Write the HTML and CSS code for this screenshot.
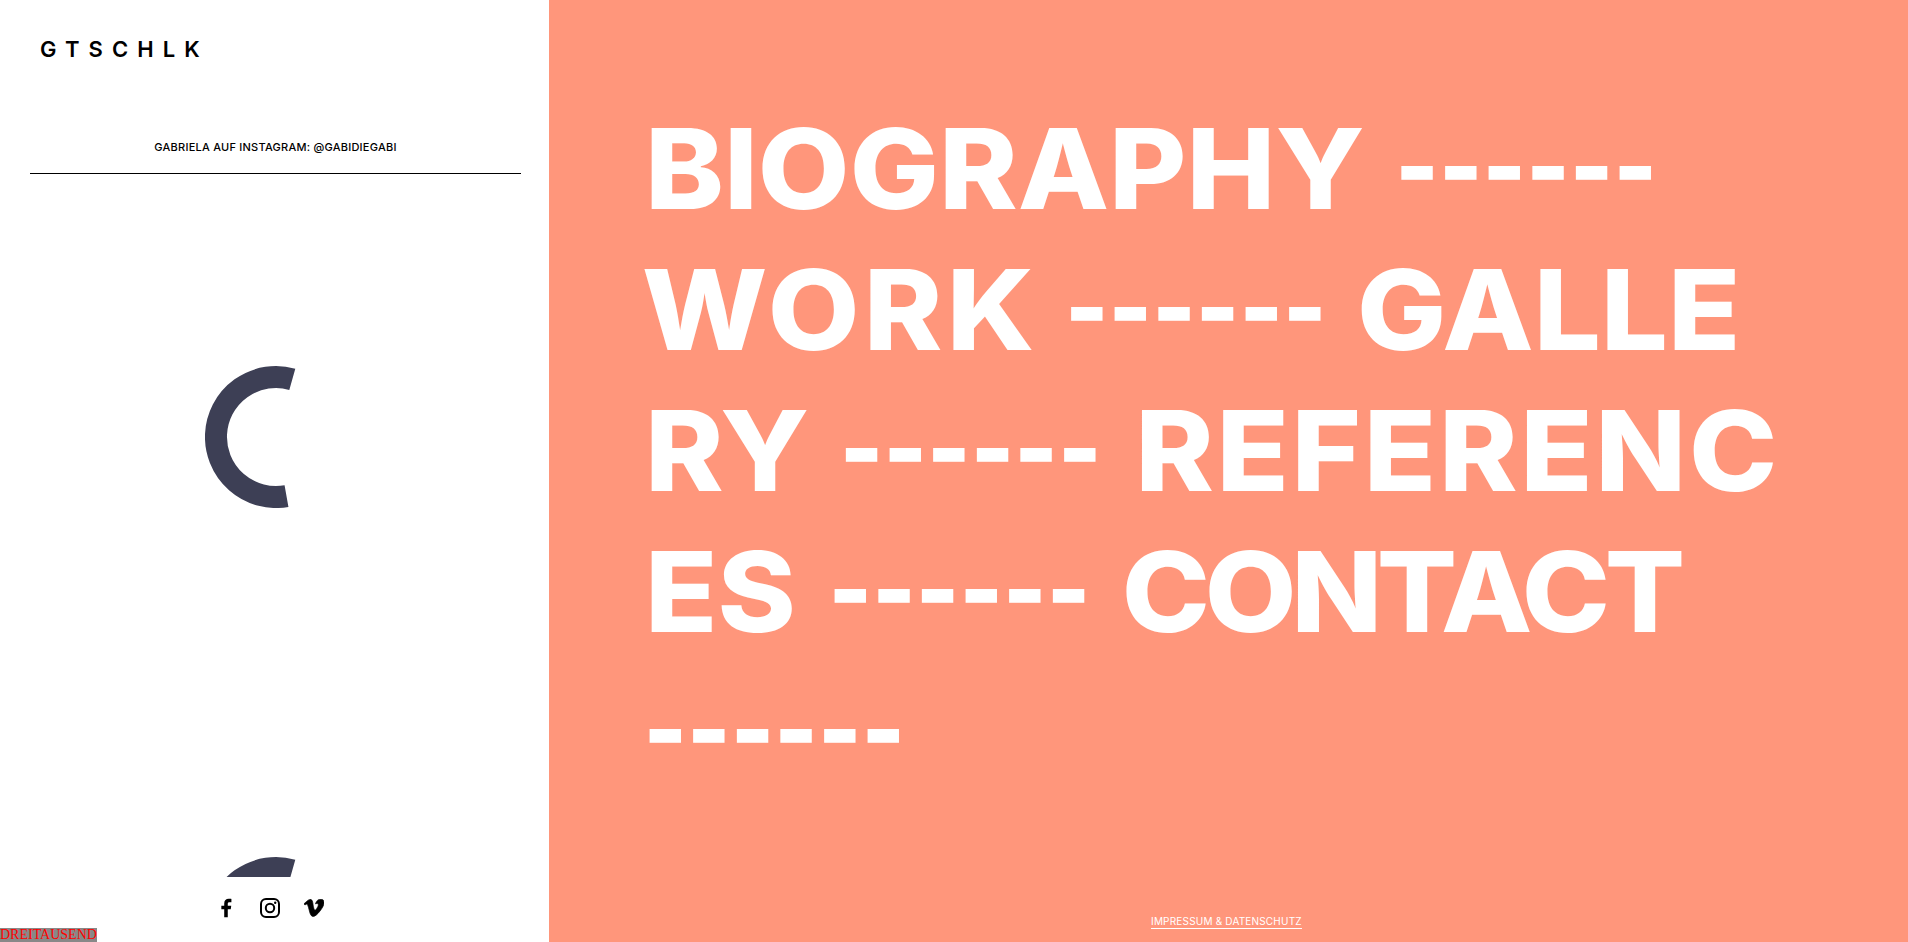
FILE: index.html
```html
<!DOCTYPE html>
<html lang="de">
<head>
<meta charset="utf-8">
<title>GTSCHLK</title>
<link rel="stylesheet" href="styles.css">
</head>
<body>
<div class="page">
  <aside class="side">
    <header class="logo-bar"><a class="logo">GTSCHLK</a></header>
    <p class="caption">GABRIELA AUF INSTAGRAM: @GABIDIEGABI</p>
    <div class="feed">
      <div class="feed-item">
        <svg class="spinner" width="142" height="142" viewBox="0 0 142 142"><path class="arc" d="M87.300 13.300A60 60 0 1 0 81.500 130.100"/></svg>
      </div>
      <div class="feed-item">
        <svg class="spinner" width="142" height="142" viewBox="0 0 142 142"><path class="arc" d="M87.300 13.300A60 60 0 1 0 81.500 130.100"/></svg>
      </div>
    </div>
    <nav class="social">
      <a class="social-link">
        <svg width="11" height="20" viewBox="0 0 13 22"><path d="M3.800 22V12.400H.4V8.400H3.800V5.600C3.800 2 6 .2 9.100.2c1.500 0 2.800.1 3.200.2v3.700h-2.200c-1.700 0-2.100.8-2.100 2v2.300h4.100l-.6 4H8V22z"/></svg>
      </a>
      <a class="social-link">
        <svg width="20" height="20" viewBox="0 0 20 20"><rect class="line" x="1" y="1" width="18" height="18" rx="5"/><circle class="line" cx="10" cy="10" r="4.200"/><circle cx="15.200" cy="4.800" r="1.200"/></svg>
      </a>
      <a class="social-link">
        <svg width="20" height="18" viewBox="0 1.500 24 21.500"><path class="bold" d="M23.977 6.416c-.105 2.338-1.739 5.543-4.894 9.609-3.268 4.247-6.026 6.37-8.29 6.37-1.409 0-2.578-1.294-3.553-3.881L5.322 11.4C4.603 8.816 3.834 7.522 3.01 7.522c-.179 0-.806.378-1.881 1.132L0 7.197c1.185-1.044 2.351-2.084 3.501-3.128C5.08 2.701 6.266 1.984 7.055 1.91c1.867-.18 3.016 1.1 3.447 3.838.465 2.953.789 4.789.971 5.507.539 2.45 1.131 3.674 1.776 3.674.502 0 1.256-.796 2.265-2.385 1.004-1.589 1.54-2.797 1.612-3.628.144-1.371-.395-2.061-1.614-2.061-.574 0-1.167.121-1.777.391 1.186-3.868 3.434-5.757 6.762-5.637 2.473.06 3.628 1.664 3.493 4.797z"/></svg>
      </a>
    </nav>
    <div class="stamp">DREITAUSEND</div>
  </aside>
  <main class="main">
    <nav class="menu">
      <div class="menu-line"><span class="word biography">BIOGRAPHY</span> <span class="dash">------</span></div>
      <div class="menu-line"><span class="word work">WORK</span> <span class="dash dash-work">------</span> <span class="word galle">GALLE</span></div>
      <div class="menu-line"><span class="word ry">RY</span> <span class="dash">------</span> <span class="word referenc">REFERENC</span></div>
      <div class="menu-line"><span class="word es">ES</span> <span class="dash dash-es">------</span> <span class="word contact">CONTACT</span></div>
      <div class="menu-line"><span class="dash">------</span></div>
    </nav>
    <a class="legal">IMPRESSUM &amp; DATENSCHUTZ</a>
  </main>
</div>
</body>
</html>
```
FILE: styles.css
```css
* { box-sizing: border-box; }
html, body { margin: 0; height: 100%; overflow: hidden; background: #fff; }
body { font-family: Inter, "Liberation Sans", sans-serif; }
.page { display: flex; height: 942px; }

.side { position: relative; width: 549px; flex: none; display: flex; flex-direction: column; background: #fff; color: #000; }
.logo-bar { padding: 36px 40px 0; height: 112px; }
.logo { font-size: 22px; font-weight: 600; letter-spacing: 9.1px; line-height: 26px; }
.caption { margin: 28px 28px 0 30px; padding-bottom: 20px; height: 34px; border-bottom: 1px solid #000; font-size: 11px; font-weight: 500; letter-spacing: .24px; line-height: 14px; text-align: center; }
.feed { flex: none; height: 703px; overflow: hidden; }
.feed-item { height: 491px; display: flex; justify-content: center; padding: 192px 0 0 2px; }
.spinner { flex: none; }
.arc { fill: none; stroke: #3d3f55; stroke-width: 22; }
.social { display: flex; justify-content: center; gap: 22px; padding: 21px 9px 0 0; align-items: center; }
.social-link { display: flex; width: 22px; justify-content: center; }
.social-link svg { fill: #000; }
.social-link .line { fill: none; stroke: #000; stroke-width: 2; }
.social-link .bold { stroke: #000; stroke-width: .8; }
.stamp { position: absolute; left: 0; bottom: 0; height: 14px; background: #888; color: #f00; font-family: "Liberation Serif", serif; font-size: 14px; line-height: 14px; }

.main { position: relative; flex: 1; background: #ff967b; color: #fff; padding: 98px 0 0 96px; }
.menu { display: flex; flex-direction: column; transform: scaleX(1.07); transform-origin: 0 0; }
.menu-line { display: flex; align-items: baseline; gap: 30px; height: 141px; font-size: 111px; font-weight: 800; line-height: 141px; white-space: pre; }
.dash { position: relative; top: -13px; font-size: 80px; font-weight: 900; letter-spacing: 2.8px; line-height: 162px; -webkit-text-stroke: 2px #fff; }
.dash-work { margin-left: -4px; }
.dash-es { margin-left: 2px; }
.work { letter-spacing: 4px; margin-left: -3px; }
.galle { margin-left: -3px; }
.referenc { letter-spacing: 2.5px; }
.contact { letter-spacing: -5px; margin-left: -2px; }
.legal { position: absolute; left: 602px; top: 914px; font-size: 10px; letter-spacing: .2px; line-height: 14px; border-bottom: 1px solid #fff; }
```
